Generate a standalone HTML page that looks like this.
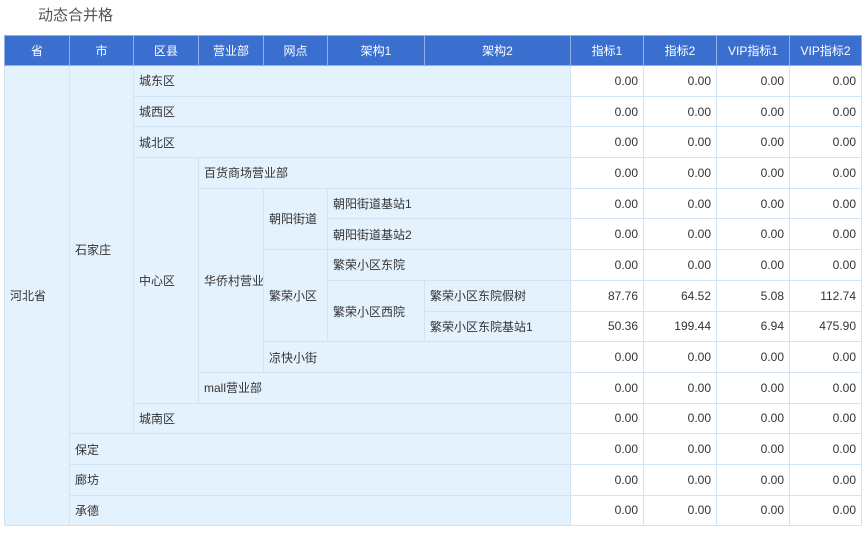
<!DOCTYPE html>
<html><head><meta charset="utf-8"><style>
body{margin:0;background:#fff;font-family:"Liberation Sans","Noto Sans CJK SC",sans-serif;font-size:12px;color:#333;}
.t{position:absolute;left:38px;top:4px;font-size:15px;color:#555;}
table{position:absolute;left:4px;top:35px;border-collapse:collapse;table-layout:fixed;width:858px;}
th{background:#3a6fcf;color:#fff;font-weight:normal;height:29px;border:1px solid #8fb1e6;padding:0;}
td{border:1px solid #d3e3f6;padding:0 0 0 5px;height:29.7px;background:#e4f2fd;white-space:nowrap;overflow:hidden;}
td.n{background:#fff;text-align:right;padding:0 5px 0 0;}
</style></head><body>
<div class="t">动态合并格</div>
<table>
<colgroup><col style="width:65px"><col style="width:64px"><col style="width:65px"><col style="width:65px"><col style="width:64px"><col style="width:97px"><col style="width:146px"><col style="width:73px"><col style="width:73px"><col style="width:73px"><col style="width:72px"></colgroup>
<tr><th>省</th><th>市</th><th>区县</th><th>营业部</th><th>网点</th><th>架构1</th><th>架构2</th><th>指标1</th><th>指标2</th><th>VIP指标1</th><th>VIP指标2</th></tr>
<tr><td rowspan="15">河北省</td><td rowspan="12">石家庄</td><td colspan="5">城东区</td><td class="n">0.00</td><td class="n">0.00</td><td class="n">0.00</td><td class="n">0.00</td></tr>
<tr><td colspan="5">城西区</td><td class="n">0.00</td><td class="n">0.00</td><td class="n">0.00</td><td class="n">0.00</td></tr>
<tr><td colspan="5">城北区</td><td class="n">0.00</td><td class="n">0.00</td><td class="n">0.00</td><td class="n">0.00</td></tr>
<tr><td rowspan="8">中心区</td><td colspan="4">百货商场营业部</td><td class="n">0.00</td><td class="n">0.00</td><td class="n">0.00</td><td class="n">0.00</td></tr>
<tr><td rowspan="6">华侨村营业</td><td rowspan="2">朝阳街道</td><td colspan="2">朝阳街道基站1</td><td class="n">0.00</td><td class="n">0.00</td><td class="n">0.00</td><td class="n">0.00</td></tr>
<tr><td colspan="2">朝阳街道基站2</td><td class="n">0.00</td><td class="n">0.00</td><td class="n">0.00</td><td class="n">0.00</td></tr>
<tr><td rowspan="3">繁荣小区</td><td colspan="2">繁荣小区东院</td><td class="n">0.00</td><td class="n">0.00</td><td class="n">0.00</td><td class="n">0.00</td></tr>
<tr><td rowspan="2">繁荣小区西院</td><td>繁荣小区东院假树</td><td class="n">87.76</td><td class="n">64.52</td><td class="n">5.08</td><td class="n">112.74</td></tr>
<tr><td>繁荣小区东院基站1</td><td class="n">50.36</td><td class="n">199.44</td><td class="n">6.94</td><td class="n">475.90</td></tr>
<tr><td colspan="3">凉快小街</td><td class="n">0.00</td><td class="n">0.00</td><td class="n">0.00</td><td class="n">0.00</td></tr>
<tr><td colspan="4">mall营业部</td><td class="n">0.00</td><td class="n">0.00</td><td class="n">0.00</td><td class="n">0.00</td></tr>
<tr><td colspan="5">城南区</td><td class="n">0.00</td><td class="n">0.00</td><td class="n">0.00</td><td class="n">0.00</td></tr>
<tr><td colspan="6">保定</td><td class="n">0.00</td><td class="n">0.00</td><td class="n">0.00</td><td class="n">0.00</td></tr>
<tr><td colspan="6">廊坊</td><td class="n">0.00</td><td class="n">0.00</td><td class="n">0.00</td><td class="n">0.00</td></tr>
<tr><td colspan="6">承德</td><td class="n">0.00</td><td class="n">0.00</td><td class="n">0.00</td><td class="n">0.00</td></tr>
</table>
</body></html>
